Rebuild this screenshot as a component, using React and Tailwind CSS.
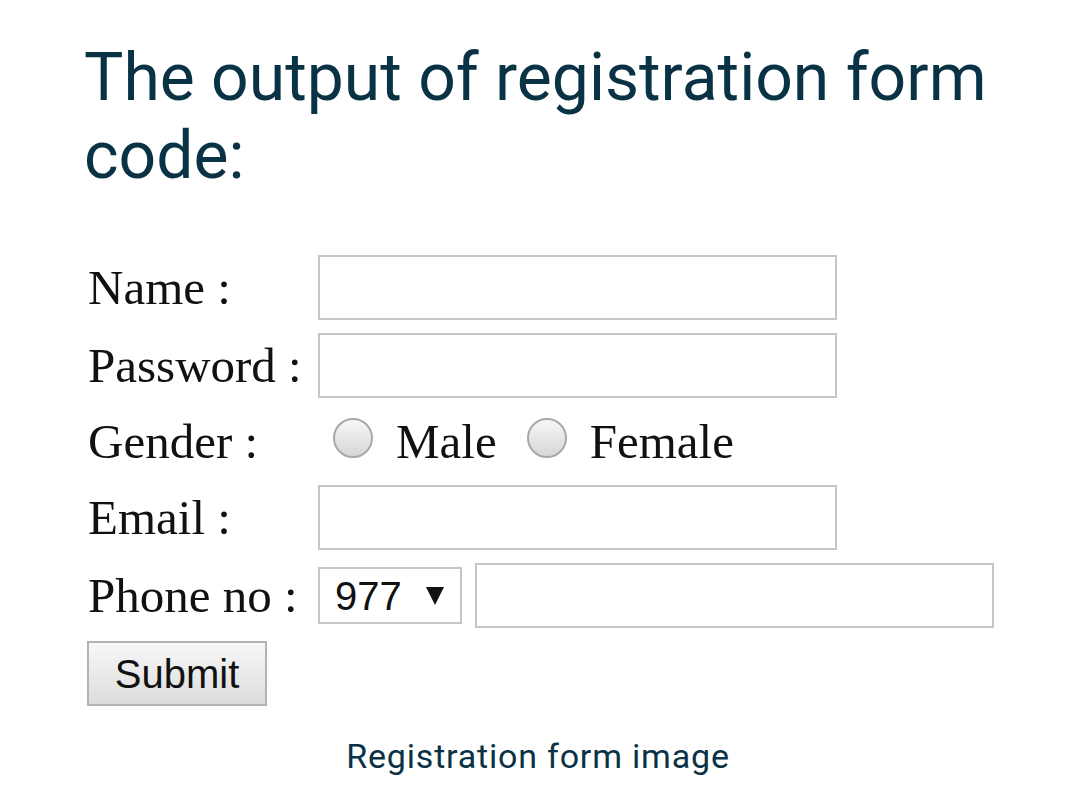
import React from "react";

const serif = { fontFamily: '"Liberation Serif", "Times New Roman", serif' };

function TextBox({ className = "" }) {
    return <div className={`h-[65px] border-2 border-[#c6c6c6] bg-white ${className}`} />;
}

function Radio() {
    return (
        <span className="inline-block w-[40px] h-[40px] rounded-full border-2 border-[#a9a9a9] bg-gradient-to-b from-[#f7f7f7] to-[#d6d6d6]" />
    );
}

function Row({ label, children, height = "h-[65px]" }) {
    return (
        <div className={`flex items-center ${height}`}>
            <div className="w-[230px] shrink-0 pt-[2px] text-[49px] leading-[1.15] text-[#111]">{label}</div>
            {children}
        </div>
    );
}

export default function App() {
    return (
        <div className="min-h-screen bg-white font-['Roboto',sans-serif]">
            {/* Heading */}
            <h1 className="pl-[84px] pt-[39px] pr-[60px] text-[66px] leading-[78px] font-normal text-[#0a3245]">
                The output of registration form code:
            </h1>

            {/* Form */}
            <div className="mt-[60px] pl-[88px] flex flex-col gap-[13px]" style={serif}>
                <Row label="Name :">
                    <TextBox className="w-[519px]" />
                </Row>
                <Row label="Password :">
                    <TextBox className="w-[519px]" />
                </Row>
                <Row label="Gender :" height="h-[61px]">
                    <div className="flex items-center pt-[2px] text-[49px] leading-[1.15] text-[#111]">
                        <span className="ml-[15px]"><Radio /></span>
                        <span className="ml-[23px]">Male</span>
                        <span className="ml-[30px]"><Radio /></span>
                        <span className="ml-[23px]">Female</span>
                    </div>
                </Row>
                <Row label="Email :">
                    <TextBox className="w-[519px]" />
                </Row>
                <Row label="Phone no :">
                    <div className="h-[57px] w-[144px] border-2 border-[#c6c6c6] bg-white flex items-center pl-[15px] font-['Liberation_Sans',Arial,sans-serif] text-[40px] text-[#111]">
                        977
                        <svg className="ml-[24px]" width="18" height="18" viewBox="0 0 18 18">
                            <polygon points="0,0 18,0 9,18" fill="#111" />
                        </svg>
                    </div>
                    <TextBox className="ml-[13px] w-[519px]" />
                </Row>
                <div>
                    <button className="h-[65px] w-[180px] -ml-[1px] border-2 border-[#b3b3b3] bg-gradient-to-b from-[#f8f8f8] to-[#dcdcdc] font-['Liberation_Sans',Arial,sans-serif] text-[40px] text-[#111] flex items-center justify-center">
                        Submit
                    </button>
                </div>
            </div>

            {/* Caption */}
            <p className="mt-[25px] text-center text-[34px] tracking-[0.8px] text-[#0a3245]">Registration form image</p>
        </div>
    );
}
